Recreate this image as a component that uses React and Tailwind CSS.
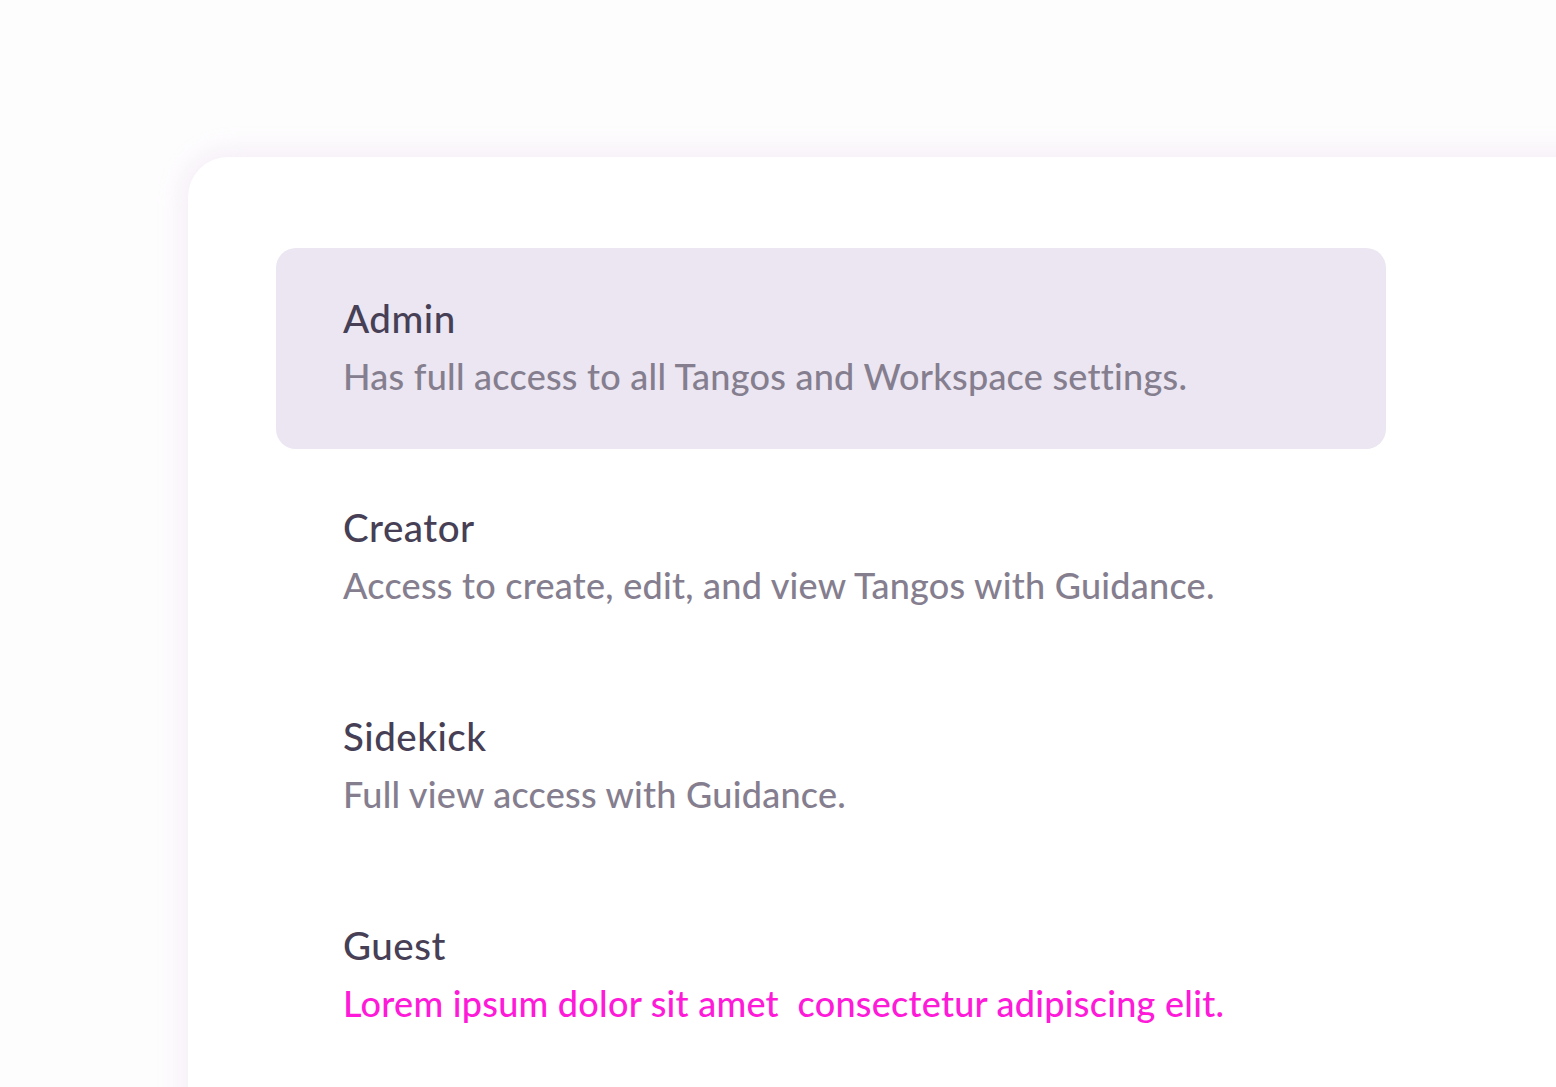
import React from 'react';

const roles = [
  { name: 'Admin', desc: 'Has full access to all Tangos and Workspace settings.', active: true },
  { name: 'Creator', desc: 'Access to create, edit, and view Tangos with Guidance.' },
  { name: 'Sidekick', desc: 'Full view access with Guidance.' },
  { name: 'Guest', desc: 'Lorem ipsum dolor sit amet  consectetur adipiscing elit.', pink: true },
];

const App = () => {
  return (
    <div className="h-[1087px] w-[1556px] overflow-hidden bg-[#fefdfe] pl-[188px] pt-[157px]" style={{ fontFamily: 'Lato, "Open Sans", sans-serif' }}>
      {/* Card */}
      <div className="h-[1000px] w-[1500px] rounded-tl-[40px] bg-white pl-[88px] pt-[91px] shadow-[0_0_24px_8px_rgba(236,224,240,0.45)]">
        <div className="flex w-[1110px] flex-col gap-[8px]">
          {roles.map((r) => (
            <div
              key={r.name}
              className={`h-[201px] rounded-[20px] pl-[67px] pt-[43px] ${r.active ? 'bg-[#ebe6f1]' : ''}`}
            >
              <div className="text-[38.5px] font-medium leading-[54px] tracking-[0.5px] text-[#463f55]">{r.name}</div>
              <div className={`whitespace-pre text-[36px] font-medium leading-[62px] tracking-[0.25px] ${r.pink ? 'text-[#ff19d8]' : 'text-[#857e8f]'}`}>
                {r.desc}
              </div>
            </div>
          ))}
        </div>
      </div>
    </div>
  );
};

export default App;
